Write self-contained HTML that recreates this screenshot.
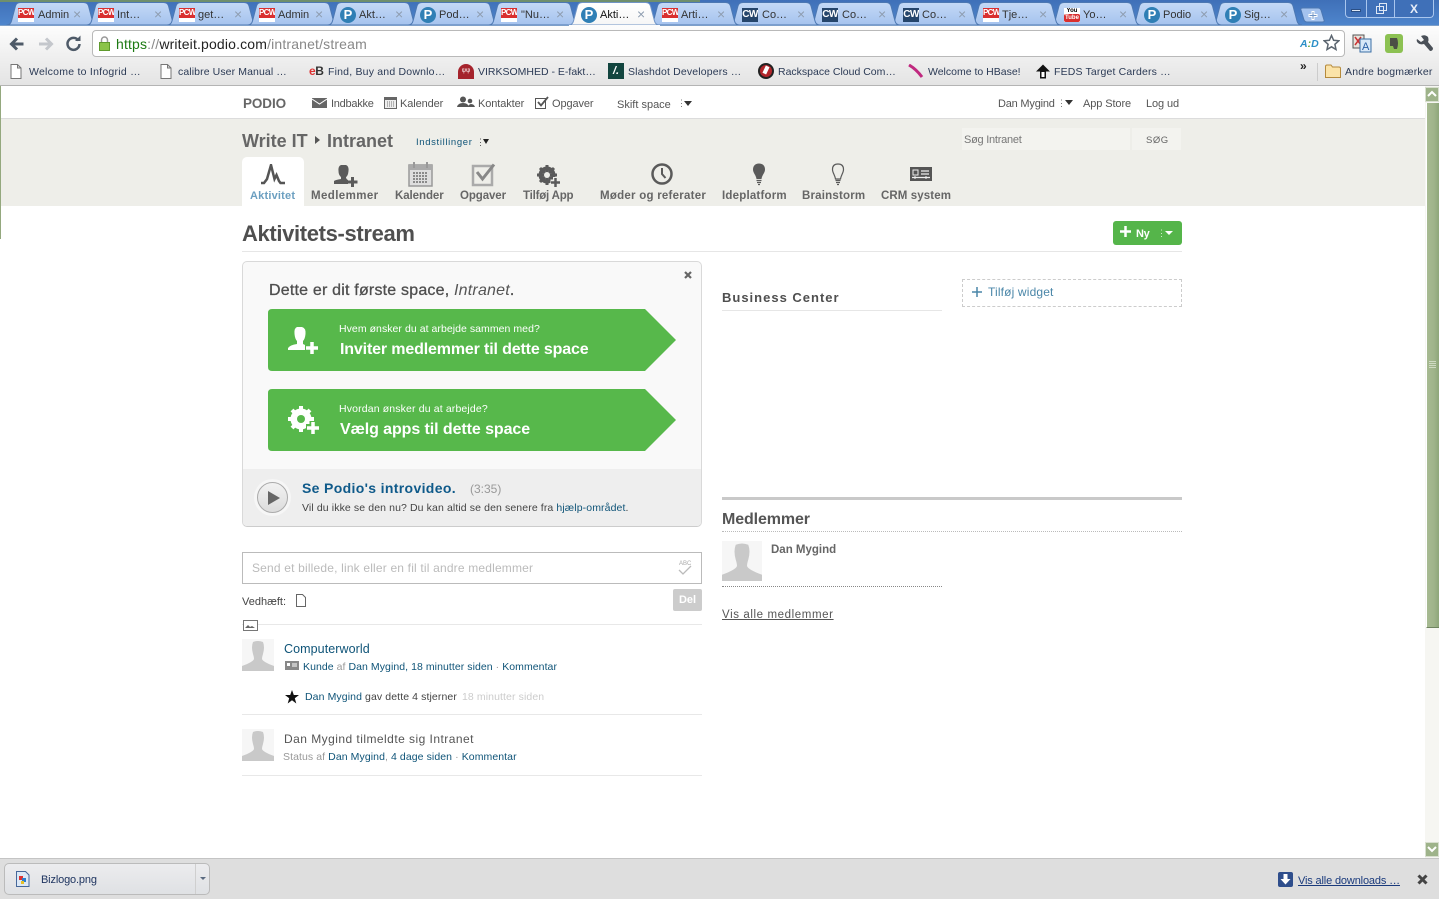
<!DOCTYPE html>
<html lang="da"><head><meta charset="utf-8"><title>Aktivitets-stream</title>
<style>
html,body{margin:0;padding:0;background:#fff}
body{width:1439px;height:899px;position:relative;overflow:hidden;font-family:"Liberation Sans",Arial,sans-serif;font-size:11px;color:#555}
.a,.t,svg.i{position:absolute}
.t{white-space:nowrap;line-height:14px;margin-top:1px}
.m0{margin-top:0}
.fv{position:absolute;top:8px;width:16px;height:14px;font:bold 7px/14px "Liberation Sans",sans-serif;text-align:center;color:#fff;overflow:hidden}
.pcw{background:#fff;color:#fff}.pcw b{display:block;background:#d92f2f;height:10px;line-height:10px;font-size:8px;letter-spacing:-.7px}
.cw{background:#25456b;font-size:10px;letter-spacing:-.6px}
.p{background:#2f7fb5;border-radius:50%;font-size:13px;height:16px;top:7px;line-height:16px}
.yt{background:#fff;color:#000;font-size:6px;line-height:6px}.yt b{display:block;background:#d92f2f;color:#fff;border-radius:2px;line-height:8px}
.tt{position:absolute;top:8px;font-size:11px;line-height:13px;color:#333;white-space:nowrap;margin-top:1px}
.x{position:absolute;top:7px;font-size:14px;line-height:14px;color:#8e9db0;margin-left:-1px}
.bm{position:absolute;top:65px;font-size:10.5px;line-height:14px;color:#2b3a55;white-space:nowrap}
.nav{font-size:11px;color:#555;top:96px;letter-spacing:-.1px}
.tb{position:absolute;top:189px;font-size:11.5px;line-height:14px;font-weight:bold;color:#666;white-space:nowrap;letter-spacing:.3px}
a,.lnk{color:#0f5478;text-decoration:none}
.sh{fill:#c9c9c9}
</style></head><body>

<!-- Chrome tab strip -->
<div class="a" style="left:0;top:0;width:1439px;height:26px;background:linear-gradient(#3f70b8,#4f86cd)"></div>
<div class="a" style="left:0;top:0;width:700px;height:2px;background:#6f8f6c"></div>

<svg class="i" style="left:0;top:0" width="1340" height="27" viewBox="0 0 1340 27">
<defs>
<linearGradient id="g1" x1="0" y1="0" x2="0" y2="1"><stop offset="0" stop-color="#c4d9f6"/><stop offset="1" stop-color="#a5c3ee"/></linearGradient>
<linearGradient id="g2" x1="0" y1="0" x2="0" y2="1"><stop offset="0" stop-color="#fff"/><stop offset="1" stop-color="#f6f6f6"/></linearGradient>
<path id="tb" d="M0 25Q4 25 5 21L9 6Q10 2.500 14 2.500H77Q81 2.500 82 6L86 21Q87 25 91 25Z"/>
</defs>
<g fill="url(#g1)" stroke="#4d78b2">
<use href="#tb" x="1211"/><use href="#tb" x="1130.500"/><use href="#tb" x="1050"/><use href="#tb" x="970"/><use href="#tb" x="889.500"/><use href="#tb" x="809"/><use href="#tb" x="729"/><use href="#tb" x="648.500"/>
<use href="#tb" x="6.500"/><use href="#tb" x="86.500"/><use href="#tb" x="167"/><use href="#tb" x="247.500"/><use href="#tb" x="327.500"/><use href="#tb" x="408"/><use href="#tb" x="488.500"/>
</g>
<use href="#tb" x="568.500" fill="url(#g2)" stroke="#6f94c6"/>
<path d="M1303 8H1318Q1320 8 1321 10L1324 20Q1325 22 1322 22H1307Q1305 22 1304 20L1301 10Q1300 8 1303 8Z" fill="#a5c3ee" stroke="#4d78b2"/>
<path d="M1313 11V20M1308.500 15.500H1317.500" stroke="#fff" stroke-width="3"/>
<path d="M1313 12V19M1309.500 15.500H1316.500" stroke="#6f94c6" stroke-width="1"/>
</svg>

<div class="fv pcw" style="left:18px"><b>PCW</b></div><span class="tt" style="left:38px">Admin</span><span class="x" style="left:74px">×</span>
<div class="fv pcw" style="left:98px"><b>PCW</b></div><span class="tt" style="left:117px">Int…</span><span class="x" style="left:155px">×</span>
<div class="fv pcw" style="left:179px"><b>PCW</b></div><span class="tt" style="left:198px">get…</span><span class="x" style="left:235px">×</span>
<div class="fv pcw" style="left:259px"><b>PCW</b></div><span class="tt" style="left:278px">Admin</span><span class="x" style="left:316px">×</span>
<div class="fv p" style="left:340px">P</div><span class="tt" style="left:359px">Akt…</span><span class="x" style="left:396px">×</span>
<div class="fv p" style="left:420px">P</div><span class="tt" style="left:439px">Pod…</span><span class="x" style="left:477px">×</span>
<div class="fv pcw" style="left:501px"><b>PCW</b></div><span class="tt" style="left:521px">"Nu…</span><span class="x" style="left:557px">×</span>
<div class="fv p" style="left:581px">P</div><span class="tt" style="left:600px;color:#111">Akti…</span><span class="x" style="left:638px">×</span>
<div class="fv pcw" style="left:662px"><b>PCW</b></div><span class="tt" style="left:681px">Arti…</span><span class="x" style="left:718px">×</span>
<div class="fv cw" style="left:742px">CW</div><span class="tt" style="left:762px">Co…</span><span class="x" style="left:798px">×</span>
<div class="fv cw" style="left:822px">CW</div><span class="tt" style="left:842px">Co…</span><span class="x" style="left:879px">×</span>
<div class="fv cw" style="left:903px">CW</div><span class="tt" style="left:922px">Co…</span><span class="x" style="left:959px">×</span>
<div class="fv pcw" style="left:983px"><b>PCW</b></div><span class="tt" style="left:1002px">Tje…</span><span class="x" style="left:1040px">×</span>
<div class="fv yt" style="left:1064px">You<b>Tube</b></div><span class="tt" style="left:1083px">Yo…</span><span class="x" style="left:1120px">×</span>
<div class="fv p" style="left:1144px">P</div><span class="tt" style="left:1163px">Podio</span><span class="x" style="left:1201px">×</span>
<div class="fv p" style="left:1225px">P</div><span class="tt" style="left:1244px">Sig…</span><span class="x" style="left:1281px">×</span>

<!-- window controls -->
<div class="a" style="left:1345px;top:0;width:89px;height:18px;background:#3f70b8;border:1px solid #a9c6ee;border-top:0;border-radius:0 0 4px 4px;box-sizing:border-box"></div>
<div class="a" style="left:1366px;top:0;width:1px;height:17px;background:#a9c6ee"></div>
<div class="a" style="left:1394px;top:0;width:1px;height:17px;background:#a9c6ee"></div>
<div class="a" style="left:1351px;top:9px;width:10px;height:3px;background:#dfe8f5;border:1px solid #2b4f85;box-sizing:border-box"></div>
<div class="a" style="left:1376px;top:6px;width:8px;height:8px;border:1px solid #dfe8f5;box-sizing:border-box"></div>
<div class="a" style="left:1379px;top:3px;width:8px;height:8px;border:1px solid #dfe8f5;box-sizing:border-box"></div>
<span class="t m0" style="left:1410px;top:2px;color:#e8eef8;font-weight:bold;font-size:12px">X</span>

<!-- Toolbar -->
<div class="a" style="left:0;top:25px;width:1439px;height:32px;background:linear-gradient(#fdfdfd,#efefef);border-top:1px solid #7d9fc9;box-sizing:border-box"></div>
<div class="a" style="left:569px;top:25px;width:91px;height:1px;background:#fcfcfc"></div>
<div class="a" style="left:0;top:57px;width:1439px;height:28px;background:linear-gradient(#efefef,#e4e4e4)"></div>
<div class="a" style="left:0;top:85px;width:1439px;height:1px;background:#b4b4b4"></div>

<svg class="i" style="left:9px;top:36px" width="18" height="16" viewBox="0 0 18 16"><path d="M14.500 8H3M8 2.500L2.500 8L8 13.500" fill="none" stroke="#4e5a68" stroke-width="3"/></svg>
<svg class="i" style="left:37px;top:36px" width="18" height="16" viewBox="0 0 18 16"><path d="M2 8H14M9 2.500L14.500 8L9 13.500" fill="none" stroke="#c4c7cc" stroke-width="3"/></svg>
<svg class="i" style="left:65px;top:35px" width="17" height="17" viewBox="0 0 17 17"><path d="M13.500 5.500A6 6 0 1 0 14.500 9" fill="none" stroke="#4e5a68" stroke-width="2.500"/><path d="M10 6H15.500V0.500Z" fill="#4e5a68"/></svg>

<div class="a" style="left:92px;top:30px;width:1253px;height:27px;background:#fff;border:1px solid #b9b9b9;border-radius:4px;box-sizing:border-box"></div>
<svg class="i" style="left:98px;top:35px" width="13" height="17" viewBox="0 0 13 17"><path d="M3.500 8V5a3 3 0 0 1 6 0V8" fill="none" stroke="#999" stroke-width="1.500"/><rect x="1.500" y="7.500" width="10" height="8" fill="#8bc34a" stroke="#5f9a2d"/></svg>
<span class="t m0" style="left:116px;top:36px;font-size:14px;line-height:16px;letter-spacing:.16px"><span style="color:#1d7a13">https</span><span style="color:#888">://</span><span style="color:#222">writeit.podio.com</span><span style="color:#888">/intranet/stream</span></span>
<span class="t m0" style="left:1300px;top:37px;font-size:10.500px;color:#2b8fc7;font-weight:bold;font-style:italic">A<span style="color:#5aa02c">:</span>D</span>
<svg class="i" style="left:1323px;top:34px" width="17" height="17" viewBox="0 0 17 17"><path d="M8.500 1.500L10.600 6.300L15.800 6.800L11.900 10.300L13 15.500L8.500 12.800L4 15.500L5.100 10.300L1.200 6.800L6.400 6.300Z" fill="#fff" stroke="#5c6670" stroke-width="1.500"/></svg>
<svg class="i" style="left:1352px;top:34px" width="20" height="19" viewBox="0 0 20 19"><rect x="1" y="1" width="11" height="13" fill="#e8e4dc" stroke="#555"/><path d="M3 3L9 11M9 3L3 11" stroke="#c33" stroke-width="1.500"/><rect x="8" y="5" width="11" height="13" fill="#d8e8f8" stroke="#3a6ea5"/><text x="10" y="16" font-size="11" font-family="Liberation Sans" fill="#2a5fa5">A</text></svg>
<div class="a" style="left:1385px;top:34px;width:18px;height:19px;background:#8cc152;border-radius:3px"></div>
<svg class="i" style="left:1387px;top:36px" width="14" height="15" viewBox="0 0 14 15"><path d="M3 2H10Q12 7 10 13H7L6 10H3Z" fill="#4b4f45"/></svg>
<svg class="i" style="left:1415px;top:34px" width="19" height="18" viewBox="0 0 19 18"><path d="M2 5L6 8L9 6L6 2Q10 0 13 3Q14 6 13 8L18 14Q18 17 15 17L9 10Q5 11 3 9Q1 7 2 5Z" fill="#4a5058"/></svg>

<!-- bookmarks -->
<svg class="i" style="left:10px;top:64px" width="12" height="15" viewBox="0 0 12 15"><path d="M1 .5H7.500L11 4V14.500H1Z M7.500 .5V4H11" fill="#fff" stroke="#777"/></svg>
<span class="bm" style="left:29px;letter-spacing:.25px">Welcome to Infogrid …</span>
<svg class="i" style="left:160px;top:64px" width="12" height="15" viewBox="0 0 12 15"><path d="M1 .5H7.500L11 4V14.500H1Z M7.500 .5V4H11" fill="#fff" stroke="#777"/></svg>
<span class="bm" style="left:178px;letter-spacing:.1px">calibre User Manual …</span>
<span class="t m0" style="left:309px;top:64px;font-size:12px;font-weight:bold;letter-spacing:-.5px"><span style="color:#d33">e</span><span style="color:#333">B</span></span>
<span class="bm" style="left:328px;letter-spacing:.2px">Find, Buy and Downlo…</span>
<div class="a" style="left:458px;top:64px;width:16px;height:15px;background:#a5232c;border-radius:8px 8px 0 0;color:#fff;font:6px/15px 'Liberation Sans',sans-serif;text-align:center">ψψ</div>
<span class="bm" style="left:478px">VIRKSOMHED - E-fakt…</span>
<div class="a" style="left:608px;top:63px;width:16px;height:16px;background:#12453f;color:#fff;font:bold 11px/16px 'Liberation Sans',sans-serif;text-align:center;font-style:italic">/.</div>
<span class="bm" style="left:628px;letter-spacing:.15px">Slashdot Developers …</span>
<div class="a" style="left:758px;top:63px;width:16px;height:16px;background:#b3262b;border-radius:50%;border:2px solid #222;box-sizing:border-box"></div>
<div class="a" style="left:764px;top:66px;width:4px;height:8px;background:#fff;transform:rotate(25deg)"></div>
<span class="bm" style="left:778px">Rackspace Cloud Com…</span>
<svg class="i" style="left:908px;top:64px" width="16" height="14" viewBox="0 0 16 14"><path d="M1 1Q8 5 14 13" stroke="#c0297f" stroke-width="3" fill="none"/></svg>
<span class="bm" style="left:928px">Welcome to HBase!</span>
<svg class="i" style="left:1035px;top:64px" width="16" height="15" viewBox="0 0 16 15"><path d="M8 .500L15 7.500H11V14.500H5V7.500H1Z" fill="#111"/><rect x="6.500" y="8" width="3" height="5" fill="#fff"/></svg>
<span class="bm" style="left:1054px;letter-spacing:.15px">FEDS Target Carders …</span>
<span class="t m0" style="left:1300px;top:59px;font-size:12px;font-weight:bold;color:#222">»</span>
<div class="a" style="left:1317px;top:63px;width:1px;height:18px;background:#ccc"></div>
<svg class="i" style="left:1325px;top:64px" width="16" height="14" viewBox="0 0 16 14"><path d="M.500 2.500Q.500 1 2 1H6L7.500 3H14Q15.500 3 15.500 4.500V13.500H.500Z" fill="#fbe3a8" stroke="#b58a3c"/></svg>
<span class="bm" style="left:1345px;letter-spacing:.2px">Andre bogmærker</span>

<!-- Page left edge -->
<div class="a" style="left:0;top:86px;width:1px;height:153px;background:#94a87e"></div>

<!-- Podio top nav -->
<span class="t" style="left:243px;top:96px;font-size:13.500px;font-weight:bold;color:#666;letter-spacing:-.1px">PODIO</span>
<svg class="i" style="left:312px;top:98px" width="15" height="11" viewBox="0 0 15 11"><rect width="15" height="10" fill="#666"/><path d="M0 1L7.500 6L15 1" fill="none" stroke="#fff"/></svg>
<span class="t nav" style="left:331px;letter-spacing:-.25px">Indbakke</span>
<svg class="i" style="left:384px;top:96px" width="13" height="13" viewBox="0 0 13 13"><rect x=".5" y="1.500" width="12" height="11" fill="#eee" stroke="#666"/><rect x="1" y="2" width="11" height="2" fill="#666"/><path d="M3 6h7M3 8h7M3 10h7" stroke="#777" stroke-dasharray="1 1"/></svg>
<span class="t nav" style="left:400px">Kalender</span>
<svg class="i" style="left:457px;top:96px" width="18" height="13" viewBox="0 0 18 13"><circle cx="6" cy="3.500" r="3" fill="#555"/><path d="M0 11Q1 7 6 7Q11 7 12 11Z" fill="#555"/><circle cx="13" cy="5" r="2.300" fill="#555"/><path d="M11 11Q12 8 14 8Q17 8 18 11Z" fill="#555"/></svg>
<span class="t nav" style="left:478px">Kontakter</span>
<svg class="i" style="left:535px;top:96px" width="14" height="13" viewBox="0 0 14 13"><rect x=".5" y="2.500" width="10" height="10" fill="none" stroke="#555"/><path d="M3 6L6 9.500L13 1" fill="none" stroke="#555" stroke-width="1.800"/></svg>
<span class="t nav" style="left:552px">Opgaver</span>
<span class="t nav" style="left:617px;top:97px;letter-spacing:0">Skift space</span>
<span class="t" style="left:677px;top:95px;font-size:9px;color:#777">⋮</span>
<div class="a" style="left:684px;top:101px;border:4px solid transparent;border-top:5px solid #333;border-bottom:0"></div>
<span class="t nav" style="left:998px;letter-spacing:-.2px">Dan Mygind</span>
<span class="t" style="left:1057px;top:95px;font-size:9px;color:#777">⋮</span>
<div class="a" style="left:1065px;top:100px;border:4px solid transparent;border-top:5px solid #333;border-bottom:0"></div>
<span class="t nav" style="left:1083px">App Store</span>
<span class="t nav" style="left:1146px">Log ud</span>

<!-- Sand header -->
<div class="a" style="left:1px;top:118px;width:1424px;height:88px;background:#eeeee9;border-top:1px solid #dcdcdc;box-sizing:border-box"></div>
<span class="t m0" style="left:242px;top:130px;font-size:18px;line-height:22px;font-weight:bold;color:#666">Write IT</span>
<div class="a" style="left:315px;top:136px;border:4px solid transparent;border-left:5px solid #555;border-right:0"></div>
<span class="t m0" style="left:327px;top:130px;font-size:18px;line-height:22px;font-weight:bold;color:#666">Intranet</span>
<span class="t" style="left:416px;top:135px;font-size:9.500px;letter-spacing:.65px;color:#0f5478">Indstillinger</span>
<span class="t" style="left:476px;top:134px;font-size:9px;color:#555">⋮</span>
<div class="a" style="left:483px;top:139px;border:3.500px solid transparent;border-top:5px solid #222;border-bottom:0"></div>
<div class="a" style="left:962px;top:128px;width:168px;height:22px;background:#f3f3ef"></div>
<span class="t" style="left:964px;top:132px;font-size:11px;color:#777;letter-spacing:-.25px">Søg Intranet</span>
<div class="a" style="left:1132px;top:128px;width:49px;height:22px;background:#f3f3ef"></div>
<span class="t" style="left:1146px;top:133px;font-size:9.500px;letter-spacing:.5px;color:#666">SØG</span>

<!-- tabs -->
<div class="a" style="left:242px;top:157px;width:62px;height:49px;background:#fff;border-radius:5px 5px 0 0"></div>
<svg class="i" style="left:260px;top:164px" width="26" height="21" viewBox="0 0 26 21"><path d="M1 19H4L7 15L11 1L14.500 15L16.500 11L19 17L20.500 19H25" fill="none" stroke="#555" stroke-width="2.500"/></svg>
<span class="tb" style="left:250px;color:#6b9fc0;font-size:11px;letter-spacing:.2px">Aktivitet</span>

<svg class="i" style="left:333px;top:164px" width="26" height="25" viewBox="0 0 26 25"><path d="M8 1h5Q16 2 15.500 7Q15 12 13 13Q13 15 15 16V20H1V17Q2 16 8 15V13Q5.500 11 5.500 7Q5 2 8 1Z" fill="#5a5a5a"/><path d="M19.500 13V23M14.500 18H24.500" stroke="#5a5a5a" stroke-width="3"/></svg>
<span class="tb" style="left:311px;letter-spacing:.4px">Medlemmer</span>

<svg class="i" style="left:408px;top:162px" width="25" height="25" viewBox="0 0 25 25"><rect x="1" y="3" width="23" height="21" fill="#dedede" stroke="#999" stroke-width="1.500"/><rect x="1" y="3" width="23" height="5" fill="#aaa"/><path d="M6 0v6M19 0v6" stroke="#999" stroke-width="2"/><path d="M5 11h15M5 14h15M5 17h15M5 20h15" stroke="#8a8a8a" stroke-width="2" stroke-dasharray="2 1"/></svg>
<span class="tb" style="left:395px;letter-spacing:-.07px">Kalender</span>

<svg class="i" style="left:471px;top:163px" width="25" height="24" viewBox="0 0 25 24"><rect x="2" y="3" width="19" height="19" fill="none" stroke="#aaa" stroke-width="2.500"/><path d="M6 9L11.500 16L23 1.500" fill="none" stroke="#888" stroke-width="3"/></svg>
<span class="tb" style="left:460px;letter-spacing:-.1px">Opgaver</span>

<svg class="i" style="left:537px;top:165px" width="24" height="23" viewBox="0 0 24 23"><circle cx="10" cy="10" r="6.500" fill="none" stroke="#5a5a5a" stroke-width="4"/><path d="M10 0V20M0 10H20M3 3L17 17M17 3L3 17" stroke="#5a5a5a" stroke-width="3"/><circle cx="10" cy="10" r="3" fill="#eeeee9"/><path d="M18.500 12V22M13.500 17H23.500" stroke="#eeeee9" stroke-width="5"/><path d="M18.500 13V22M14 17.500H23" stroke="#5a5a5a" stroke-width="2.500"/></svg>
<span class="tb" style="left:523px;letter-spacing:-.2px">Tilføj App</span>

<svg class="i" style="left:651px;top:163px" width="22" height="22" viewBox="0 0 22 22"><circle cx="11" cy="11" r="9.500" fill="none" stroke="#5a5a5a" stroke-width="2.500"/><path d="M11 5V11L14.500 15" fill="none" stroke="#5a5a5a" stroke-width="2"/></svg>
<span class="tb" style="left:600px;letter-spacing:.25px">Møder og referater</span>

<svg class="i" style="left:752px;top:163px" width="14" height="23" viewBox="0 0 14 23"><path d="M7 0.500C11 0.500 13 3 13 6.500C13 10 10 12 9.500 16H4.500C4 12 1 10 1 6.500C1 3 3 0.500 7 0.500Z" fill="#5a5a5a"/><path d="M4.500 17.500H9.500M5 19.500H9M6 21.500H8" stroke="#5a5a5a" stroke-width="1.300"/></svg>
<span class="tb" style="left:722px;letter-spacing:.2px">Ideplatform</span>

<svg class="i" style="left:831px;top:163px" width="14" height="23" viewBox="0 0 14 23"><path d="M7 1C11 1 12.500 3.500 12.500 6.500C12.500 10 10 12 9.500 16H4.500C4 12 1.500 10 1.500 6.500C1.500 3.500 3 1 7 1Z" fill="none" stroke="#5a5a5a" stroke-width="1.200"/><path d="M4.500 17.500H9.500M5 19.500H9M6 21.500H8" stroke="#5a5a5a" stroke-width="1.300"/></svg>
<span class="tb" style="left:802px;letter-spacing:.2px">Brainstorm</span>

<svg class="i" style="left:910px;top:167px" width="22" height="15" viewBox="0 0 22 15"><rect width="22" height="14" fill="#555"/><rect x="3" y="3" width="5" height="5" fill="none" stroke="#eee"/><path d="M11 4H19M11 7H19M2 10.500H20" stroke="#eee" stroke-width="1.200"/><path d="M5 9v3M16 9v3" stroke="#eee"/></svg>
<span class="tb" style="left:881px;letter-spacing:.1px">CRM system</span>

<!-- heading -->
<span class="t m0" style="left:242px;top:221px;font-size:22px;line-height:26px;font-weight:bold;color:#4f4f4f;letter-spacing:-.35px">Aktivitets-stream</span>
<div class="a" style="left:242px;top:251px;width:940px;height:1px;background:#e6e6e6"></div>
<div class="a" style="left:1113px;top:221px;width:69px;height:24px;background:#55b54a;border-radius:3px"></div>
<svg class="i" style="left:1120px;top:226px" width="11" height="11" viewBox="0 0 11 11"><path d="M5.500 0V11M0 5.500H11" stroke="#fff" stroke-width="2.500"/></svg>
<span class="t" style="left:1136px;top:226px;font-size:11px;font-weight:bold;color:#fff;letter-spacing:-.3px">Ny</span>
<span class="t" style="left:1157px;top:225px;font-size:9px;color:#d5edd2">⋮</span>
<div class="a" style="left:1165px;top:231px;border:4px solid transparent;border-top:4px solid #fff;border-bottom:0"></div>

<!-- welcome box -->
<div class="a" style="left:242px;top:261px;width:460px;height:266px;background:#f9f9f9;border:1px solid #d9d9d9;border-bottom-color:#ccc;border-radius:5px;box-sizing:border-box;overflow:hidden">
  <div class="a" style="left:0;top:207px;width:458px;height:57px;background:#eee"></div>
</div>
<svg class="i" style="left:684px;top:271px" width="8" height="8" viewBox="0 0 8 8"><path d="M1 1L7 7M7 1L1 7" stroke="#666" stroke-width="2.200"/></svg>
<span class="t" style="left:269px;top:280px;font-size:16px;line-height:19px;color:#4f4f4f;font-weight:normal;letter-spacing:.2px;-webkit-text-stroke:.3px #4f4f4f">Dette er dit første space, <i style="-webkit-text-stroke:0;font-weight:normal;color:#555">Intranet</i>.</span>

<svg class="i" style="left:268px;top:309px" width="409" height="62" viewBox="0 0 409 62"><path d="M4 0H377L408 31L377 62H4Q0 62 0 58V4Q0 0 4 0Z" fill="#57b84b"/></svg>
<svg class="i" style="left:268px;top:389px" width="409" height="62" viewBox="0 0 409 62"><path d="M4 0H377L408 31L377 62H4Q0 62 0 58V4Q0 0 4 0Z" fill="#57b84b"/></svg>
<svg class="i" style="left:288px;top:326px" width="31" height="29" viewBox="0 0 31 29"><path d="M9 1h5Q18 2 17.500 8Q17 13 15 15V18L17 19V24H0V22Q2 19 9 18V15Q7 13 6.500 8Q6 2 9 1Z" fill="#fff"/><path d="M24 16V28M18 22H30" stroke="#fff" stroke-width="3.500"/></svg>
<svg class="i" style="left:288px;top:405px" width="32" height="30" viewBox="0 0 32 30"><circle cx="13" cy="14" r="8" fill="none" stroke="#fff" stroke-width="5"/><path d="M13 1V27M0 14H26M4 5L22 23M22 5L4 23" stroke="#fff" stroke-width="4"/><circle cx="13" cy="14" r="4" fill="#57b84b"/><path d="M25 16V29M18 22.500H31" stroke="#57b84b" stroke-width="7"/><path d="M25 17V29M19 23H31" stroke="#fff" stroke-width="3.500"/></svg>
<span class="t" style="left:339px;top:321px;font-size:10.500px;color:#fff;letter-spacing:.05px">Hvem ønsker du at arbejde sammen med?</span>
<span class="t" style="left:340px;top:339px;font-size:16px;line-height:19px;font-weight:bold;color:#fff;letter-spacing:-.15px">Inviter medlemmer til dette space</span>
<span class="t" style="left:339px;top:401px;font-size:10.500px;color:#fff;letter-spacing:.14px">Hvordan ønsker du at arbejde?</span>
<span class="t" style="left:340px;top:419px;font-size:16px;line-height:19px;font-weight:bold;color:#fff;letter-spacing:-.08px">Vælg apps til dette space</span>

<div class="a" style="left:254px;top:479px;width:37px;height:37px;background:#f6f6f6;border-radius:50%"></div>
<div class="a" style="left:257px;top:482px;width:31px;height:31px;background:linear-gradient(#f2f2f2,#dcdcdc);border:1px solid #aaa;border-radius:50%;box-sizing:border-box"></div>
<div class="a" style="left:268px;top:491px;border:7px solid transparent;border-left:12px solid #666;border-right:0"></div>
<span class="t m0" style="left:302px;top:480px;font-size:14px;line-height:16px;font-weight:bold;letter-spacing:.34px;color:#0f5a8a">Se Podio's introvideo.</span>
<span class="t m0" style="left:470px;top:482px;font-size:12px;color:#999">(3:35)</span>
<span class="t" style="left:302px;top:500px;font-size:10.500px;color:#444;letter-spacing:.11px">Vil du ikke se den nu? Du kan altid se den senere fra <a>hjælp-området</a>.</span>

<!-- share box -->
<div class="a" style="left:242px;top:552px;width:460px;height:32px;border:1px solid #bbb;box-sizing:border-box;background:#fff"></div>
<span class="t m0" style="left:252px;top:561px;font-size:12px;color:#bbb;letter-spacing:.18px">Send et billede, link eller en fil til andre medlemmer</span>
<span class="t m0" style="left:679px;top:561px;font-size:6px;line-height:7px;color:#aaa">ABC</span>
<svg class="i" style="left:678px;top:564px" width="14" height="12" viewBox="0 0 14 12"><path d="M1 6L5 10L13 2" fill="none" stroke="#bbb" stroke-width="1.300"/></svg>
<span class="t" style="left:242px;top:594px;font-size:11px;color:#444">Vedhæft:</span>
<svg class="i" style="left:296px;top:594px" width="10" height="13" viewBox="0 0 10 13"><path d="M.5 .5H6.500L9.500 3.500V12.500H.5Z" fill="#fff" stroke="#666"/></svg>
<div class="a" style="left:673px;top:589px;width:29px;height:22px;background:#ccc;border-radius:2px;color:#fff;font:bold 11px/22px 'Liberation Sans',sans-serif;text-align:center">Del</div>
<div class="a" style="left:242px;top:624px;width:460px;height:1px;background:#e8e8e8"></div>
<svg class="i" style="left:243px;top:620px" width="15" height="11" viewBox="0 0 15 11"><rect x=".5" y=".5" width="14" height="10" fill="#fff" stroke="#777"/><path d="M2 8L5 5L7 7L9 6L12 8Z" fill="#666"/></svg>

<!-- feed -->
<svg class="i" style="left:242px;top:639px" width="32" height="32" viewBox="0 0 32 32"><rect width="32" height="32" fill="#f6f6f6"/><path d="M11 3Q16 1 21 3Q23 8 21 15Q20 18 20 20Q21 23 32 27V32H0V27Q11 23 12 20Q12 18 11 15Q9 8 11 3Z" class="sh"/></svg>
<span class="t" style="left:284px;top:641px;font-size:12.500px;line-height:15px;color:#0f5478;letter-spacing:.08px">Computerworld</span>
<svg class="i" style="left:285px;top:661px" width="14" height="9" viewBox="0 0 14 9"><rect width="14" height="9" fill="#888"/><rect x="2" y="2" width="3" height="3" fill="#fff"/><path d="M7 3H12M7 5H12" stroke="#fff"/></svg>
<span class="t" style="left:303px;top:659px;font-size:10.500px;color:#999;letter-spacing:.06px"><a>Kunde</a> af <a>Dan Mygind, 18 minutter siden</a> · <a>Kommentar</a></span>
<svg class="i" style="left:285px;top:690px" width="14" height="14" viewBox="0 0 14 14"><path d="M7 0L8.800 5H14L9.800 8.200L11.300 13.500L7 10.300L2.700 13.500L4.200 8.200L0 5H5.200Z" fill="#111"/></svg>
<span class="t" style="left:305px;top:689px;font-size:10.500px;color:#444;letter-spacing:.1px"><a>Dan Mygind</a> gav dette 4 stjerner <span style="color:#ccc;margin-left:2px">18 minutter siden</span></span>
<div class="a" style="left:242px;top:714px;width:460px;height:1px;background:#e8e8e8"></div>
<svg class="i" style="left:242px;top:729px" width="32" height="32" viewBox="0 0 32 32"><rect width="32" height="32" fill="#f6f6f6"/><path d="M11 3Q16 1 21 3Q23 8 21 15Q20 18 20 20Q21 23 32 27V32H0V27Q11 23 12 20Q12 18 11 15Q9 8 11 3Z" class="sh"/></svg>
<span class="t" style="left:284px;top:731px;font-size:12px;line-height:15px;color:#555;letter-spacing:.46px">Dan Mygind tilmeldte sig Intranet</span>
<span class="t" style="left:283px;top:749px;font-size:10.500px;color:#999;letter-spacing:.08px">Status af <a>Dan Mygind</a>, <a>4 dage siden</a> · <a>Kommentar</a></span>
<div class="a" style="left:242px;top:775px;width:460px;height:1px;background:#e8e8e8"></div>

<!-- right column -->
<span class="t" style="left:722px;top:289px;font-size:13px;line-height:16px;font-weight:bold;color:#4f4f4f;letter-spacing:1px">Business Center</span>
<div class="a" style="left:722px;top:310px;width:220px;height:1px;background:#e6e6e6"></div>
<div class="a" style="left:962px;top:279px;width:220px;height:28px;border:1px dashed #ccc;box-sizing:border-box"></div>
<svg class="i" style="left:972px;top:287px" width="10" height="10" viewBox="0 0 10 10"><path d="M5 0V10M0 5H10" stroke="#4a86a8" stroke-width="1.500"/></svg>
<span class="t m0" style="left:988px;top:285px;font-size:12px;color:#4a86a8;letter-spacing:.15px">Tilføj widget</span>
<div class="a" style="left:722px;top:497px;width:460px;height:3px;background:#c9c9c9"></div>
<span class="t" style="left:722px;top:509px;font-size:16px;line-height:19px;font-weight:bold;color:#555;letter-spacing:-.12px">Medlemmer</span>
<div class="a" style="left:722px;top:531px;width:460px;height:1px;border-top:1px dotted #bbb;box-sizing:border-box"></div>
<svg class="i" style="left:722px;top:541px" width="40" height="40" viewBox="0 0 32 32"><rect width="32" height="32" fill="#f6f6f6"/><path d="M11 3Q16 1 21 3Q23 8 21 15Q20 18 20 20Q21 23 32 27V32H0V27Q11 23 12 20Q12 18 11 15Q9 8 11 3Z" class="sh"/></svg>
<span class="t" style="left:771px;top:542px;font-size:11.500px;font-weight:bold;color:#666">Dan Mygind</span>
<div class="a" style="left:722px;top:586px;width:220px;height:1px;border-top:1px dotted #888;box-sizing:border-box"></div>
<span class="t" style="left:722px;top:607px;font-size:11.500px;color:#555;text-decoration:underline;letter-spacing:.6px">Vis alle medlemmer</span>

<!-- scrollbar -->
<div class="a" style="left:1425px;top:86px;width:14px;height:772px;background:#f6f6f2"></div>
<div class="a" style="left:1425px;top:87px;width:14px;height:15px;background:#9eb38a;border:1px solid #d8dfcf;box-sizing:border-box"></div>
<svg class="i" style="left:1427px;top:90px" width="10" height="8" viewBox="0 0 10 8"><path d="M1 6L5 2L9 6" fill="none" stroke="#fff" stroke-width="2"/></svg>
<div class="a" style="left:1426px;top:103px;width:13px;height:525px;background:linear-gradient(90deg,#a7ba92,#9fb38a 60%,#8ea67a);border-left:1px solid #fff;border-bottom:1px solid #6f8460;box-sizing:border-box"></div>
<div class="a" style="left:1429px;top:361px;width:7px;height:8px;background:repeating-linear-gradient(#cfdac3 0 1px,transparent 1px 2px)"></div>
<div class="a" style="left:1425px;top:842px;width:14px;height:15px;background:#9eb38a;border:1px solid #d8dfcf;box-sizing:border-box"></div>
<svg class="i" style="left:1427px;top:845px" width="10" height="8" viewBox="0 0 10 8"><path d="M1 2L5 6L9 2" fill="none" stroke="#fff" stroke-width="2"/></svg>

<!-- download bar -->
<div class="a" style="left:0;top:858px;width:1439px;height:41px;background:#dedede;border-top:1px solid #c4c4c4;box-sizing:border-box"></div>
<div class="a" style="left:4px;top:863px;width:206px;height:32px;background:linear-gradient(#ececee,#dfe1e4);border:1px solid #bbb;border-radius:5px;box-sizing:border-box"></div>
<div class="a" style="left:195px;top:864px;width:1px;height:30px;background:#cfcfcf"></div>
<svg class="i" style="left:16px;top:871px" width="14" height="16" viewBox="0 0 14 16"><path d="M.5 .5H9.500L13 4V15.500H.5Z" fill="#dce8f6" stroke="#46689a"/><rect x="3" y="5" width="4" height="4" fill="#d33"/><rect x="6" y="7" width="4" height="4" fill="#2a7fd0"/><rect x="5" y="10" width="3" height="3" fill="#e6c229"/></svg>
<span class="t" style="left:41px;top:872px;font-size:11px;color:#1f3560;letter-spacing:-.15px">Bizlogo.png</span>
<div class="a" style="left:200px;top:877px;border:3px solid transparent;border-top:3px solid #5a6a80;border-bottom:0"></div>
<div class="a" style="left:1278px;top:872px;width:15px;height:15px;background:#2f4e8c;border-radius:2px"></div>
<svg class="i" style="left:1280px;top:874px" width="11" height="11" viewBox="0 0 11 11"><path d="M3.500 0H7.500V5H10.500L5.500 10.500L.5 5H3.500Z" fill="#fff"/></svg>
<span class="t" style="left:1298px;top:873px;font-size:11px;color:#1a3a7c;text-decoration:underline;letter-spacing:-.15px">Vis alle downloads …</span>
<svg class="i" style="left:1417px;top:874px" width="11" height="11" viewBox="0 0 11 11"><path d="M1.500 1.500L9.500 9.500M9.500 1.500L1.500 9.500" stroke="#444" stroke-width="3"/></svg>
</body></html>
